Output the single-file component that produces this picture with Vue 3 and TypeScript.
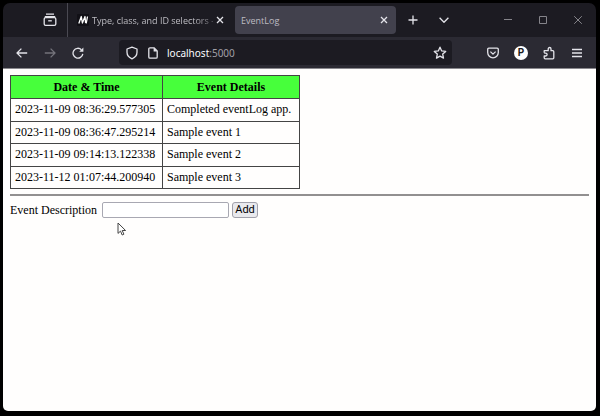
<script setup lang="ts">
import { ref } from 'vue'

interface LogEvent {
  time: string
  details: string
}

const events = ref<LogEvent[]>([
  { time: '2023-11-09 08:36:29.577305', details: 'Completed eventLog app.' },
  { time: '2023-11-09 08:36:47.295214', details: 'Sample event 1' },
  { time: '2023-11-09 09:14:13.122338', details: 'Sample event 2' },
  { time: '2023-11-12 01:07:44.200940', details: 'Sample event 3' },
])
const description = ref('')

function addEvent(): void {
  const details = description.value.trim()
  if (!details) return
  const time = new Date().toISOString().replace('T', ' ').replace('Z', '000')
  events.value.push({ time, details })
  description.value = ''
}
</script>

<template>
  <div class="window">
    <header class="tabbar">
      <button class="icon view" aria-label="Firefox View">
        <svg width="14" height="14" viewBox="0 0 14 14">
          <path d="M3 1.2h8M1.8 3.6h10.4" />
          <rect x="1.2" y="4.6" width="11.6" height="7.8" rx="1.4" />
          <path d="M5.2 7.8h3.6" />
        </svg>
      </button>
      <div class="tab">
        <svg class="favicon" width="12" height="12" viewBox="0 0 12 12">
          <rect width="12" height="12" rx="1" />
          <path d="M1.8 9.5L4.3 2.5L5.4 9L8 2.5L8.6 9M10.5 2.5L9.2 9.5" />
        </svg>
        <span class="title fade">Type, class, and ID selectors -</span>
        <button class="icon close" aria-label="Close tab">
          <svg width="8" height="8" viewBox="0 0 8 8"><path d="M1 1l6 6M7 1l-6 6" /></svg>
        </button>
      </div>
      <div class="tab active">
        <span class="title">EventLog</span>
        <button class="icon close" aria-label="Close tab">
          <svg width="8" height="8" viewBox="0 0 8 8"><path d="M1 1l6 6M7 1l-6 6" /></svg>
        </button>
      </div>
      <div class="tabtools">
        <button class="icon" aria-label="New tab">
          <svg width="10" height="10" viewBox="0 0 10 10"><path d="M5 .5v9M.5 5h9" /></svg>
        </button>
        <button class="icon" aria-label="List all tabs">
          <svg width="10" height="10" viewBox="0 0 10 10"><path d="M.6 2.8L5 7.2l4.4-4.4" /></svg>
        </button>
      </div>
      <div class="controls">
        <button class="icon" aria-label="Minimize">
          <svg width="8" height="8" viewBox="0 0 8 8"><path d="M0 3.5h8" /></svg>
        </button>
        <button class="icon" aria-label="Maximize">
          <svg width="8" height="8" viewBox="0 0 8 8"><path d="M.5.5h7v7h-7z" /></svg>
        </button>
        <button class="icon" aria-label="Close window">
          <svg width="8" height="8" viewBox="0 0 8 8"><path d="M.2.2l7.6 7.6M7.8.2L.2 7.8" /></svg>
        </button>
      </div>
    </header>

    <nav class="navbar">
      <div class="history">
        <button class="icon" aria-label="Back">
          <svg width="12" height="12" viewBox="0 0 12 12"><path d="M11.2 6H1M5.4 1.6L1 6l4.4 4.4" /></svg>
        </button>
        <button class="icon dim" aria-label="Forward">
          <svg width="12" height="12" viewBox="0 0 12 12"><path d="M.8 6H11M6.6 1.6L11 6l-4.4 4.4" /></svg>
        </button>
        <button class="icon" aria-label="Reload">
          <svg width="12" height="12" viewBox="0 0 12 12">
            <path d="M9.4 2.7A4.9 4.9 0 1 0 10.8 6.8" />
            <path class="solid" d="M11.4.6v4.2H7.2z" />
          </svg>
        </button>
      </div>
      <div class="urlbar">
        <svg width="12" height="14" viewBox="0 0 12 14">
          <path d="M6 1.2L11 3v3.2c0 3-1.8 5.2-5 6.6C2.8 11.4 1 9.2 1 6.2V3z" />
        </svg>
        <svg width="10" height="12" viewBox="0 0 10 12">
          <path d="M6 .8H2A1.2 1.2 0 0 0 .8 2v8A1.2 1.2 0 0 0 2 11.2h6A1.2 1.2 0 0 0 9.2 10V4z" />
          <path class="solid" d="M5.6.8v3.6h3.6z" />
        </svg>
        <span class="url"><b>localhost</b>:5000</span>
        <button class="icon star" aria-label="Bookmark this page">
          <svg width="14" height="14" viewBox="0 0 14 14">
            <path d="M7 1.2l1.7 3.7 4 .5-3 2.7.8 4L7 10.1l-3.5 2 .8-4-3-2.7 4-.5z" />
          </svg>
        </button>
      </div>
      <div class="extensions">
        <button class="icon" aria-label="Save to Pocket">
          <svg width="12" height="12" viewBox="0 0 12 12">
            <path d="M1.8 1.2h8.4a1.1 1.1 0 0 1 1.1 1.1v3.2a5.3 5.3 0 0 1-10.6 0V2.3a1.1 1.1 0 0 1 1.1-1.1z" />
            <path d="M3.4 4.6L6 7.1l2.6-2.5" />
          </svg>
        </button>
        <button class="icon badge" aria-label="Profile">P</button>
        <button class="icon" aria-label="Extensions">
          <svg width="12" height="14" viewBox="0 0 12 14">
            <path d="M1.2 6.8V4.7h4V2.9a1.4 1.4 0 0 1 2.8 0v1.8h1.8a1 1 0 0 1 1 1v6.1a1 1 0 0 1-1 1H2.2a1 1 0 0 1-1-1V10h1.5a1.4 1.4 0 0 0 1.4-1.4a1.4 1.4 0 0 0-1.4-1.4H1.2" />
          </svg>
        </button>
        <button class="icon" aria-label="Menu">
          <svg width="10" height="10" viewBox="0 0 10 10"><path d="M0 1.5h10M0 5h10M0 8.5h10" /></svg>
        </button>
      </div>
    </nav>

    <main class="page">
      <table>
        <thead>
          <tr><th class="when">Date &amp; Time</th><th>Event Details</th></tr>
        </thead>
        <tbody>
          <tr v-for="event in events" :key="event.time">
            <td>{{ event.time }}</td>
            <td>{{ event.details }}</td>
          </tr>
        </tbody>
      </table>
      <hr />
      <form @submit.prevent="addEvent">
        <label for="description">Event Description</label>
        <input id="description" v-model="description" type="text" />
        <button type="submit">Add</button>
      </form>
      <svg class="cursor" width="10" height="14" viewBox="0 0 10 14" aria-hidden="true">
        <path d="M1 1v10.4l2.5-2.3 1.7 3.9 1.7-.8-1.7-3.7h3.4z" />
      </svg>
    </main>
  </div>
</template>

<style>
html,
body,
#app {
  height: 100%;
}
body {
  margin: 0;
  background: #000;
}
</style>

<style scoped>
.window {
  box-sizing: border-box;
  height: 100%;
  display: flex;
  flex-direction: column;
  padding: 3px 4px 5px 3px;
  font-family: 'Open Sans', sans-serif;
  font-size: 9px;
  color: #fbfbfe;
}
svg {
  display: block;
  flex: none;
  fill: none;
  stroke: currentColor;
  stroke-width: 1.3;
  stroke-linejoin: round;
}
.solid {
  fill: currentColor;
  stroke: none;
}
.icon {
  display: flex;
  align-items: center;
  justify-content: center;
  flex: none;
  width: 28px;
  height: 28px;
  padding: 0;
  border: 0;
  background: none;
  color: #e4e4ea;
}
.tabbar {
  display: flex;
  align-items: center;
  height: 34px;
  flex: none;
  background: #1c1b22;
  border-radius: 7px 7px 0 0;
}
.view {
  box-sizing: border-box;
  width: 65px;
  height: 34px;
  padding-left: 29px;
  border-right: 1px solid #4a4952;
}
.tab {
  box-sizing: border-box;
  display: flex;
  align-items: center;
  flex: 0 1 161px;
  min-width: 0;
  height: 28px;
  margin-left: 6px;
  padding: 0 5px 0 6px;
  border-radius: 4px;
  color: #bdbcc2;
}
.tab .icon.close {
  width: 14px;
}
.tab:not(.active) {
  flex-basis: 158px;
  padding-left: 3px;
}
.tab.active {
  margin-left: 3px;
  background: #42414d;
}
.favicon {
  margin-right: 3px;
  color: #fff;
}
.favicon rect {
  fill: #111016;
  stroke: none;
}
.title {
  flex: 1;
  min-width: 0;
  white-space: nowrap;
}
.fade {
  mask-image: linear-gradient(to left, #0006, #000 20px);
}
.tabtools {
  display: flex;
  gap: 3px;
  margin-left: 3px;
}
.controls {
  display: flex;
  gap: 7px;
  margin-left: auto;
  margin-right: 4px;
}
.controls .icon {
  color: #85848a;
}
.controls svg {
  stroke-width: 1;
}
.navbar {
  box-sizing: border-box;
  display: flex;
  align-items: center;
  height: 31px;
  flex: none;
  padding: 0 5px;
  background: #2b2a33;
}
.history {
  display: flex;
}
.icon.dim {
  color: #74737b;
}
.urlbar {
  box-sizing: border-box;
  flex: 1;
  display: flex;
  align-items: center;
  gap: 10px;
  height: 25px;
  margin: 0 27px;
  padding: 0 0 0 7px;
  border-radius: 4px;
  background: #1c1b22;
  color: #e4e4ea;
}
.url {
  flex: 1;
  margin-left: -1px;
  font-family: 'Noto Sans', sans-serif;
  font-size: 10px;
  color: #a09fa6;
}
.url b {
  font-weight: 400;
  color: #fbfbfe;
}
.star {
  width: 25px;
}
.extensions {
  display: flex;
  align-items: center;
}
.icon.badge {
  width: 14px;
  height: 14px;
  margin: 0 7px;
  border-radius: 50%;
  background: #fff;
  color: #1c1b22;
  font: 700 10px Roboto, sans-serif;
}
.page {
  position: relative;
  box-sizing: border-box;
  flex: 1;
  padding: 6px 7px;
  border-top: 1px solid #8a898e;
  background: #fffefd;
  border-radius: 0 0 5px 5px;
  font: 12px 'Liberation Serif', serif;
  color: #000;
}
table {
  width: 290px;
  max-width: 100%;
  height: 114px;
  border-collapse: collapse;
}
th,
td {
  padding: 0 4px;
  border: 1px solid #444;
  text-align: left;
}
th {
  height: 22px;
  background: #47ff3b;
  text-align: center;
}
.when {
  width: 143px;
}
hr {
  margin: 5px 0 6px;
  border: 0;
  border-top: 2px solid #929090;
}
form {
  display: flex;
  align-items: center;
  gap: 3px;
}
form label {
  width: 89px;
}
form input {
  box-sizing: border-box;
  width: 127px;
  height: 16px;
  padding: 0 2px;
  border: 1px solid #a8a8b2;
  border-radius: 2px;
  background: #fff;
  font: 11px Roboto, sans-serif;
}
form button {
  box-sizing: border-box;
  width: 26px;
  height: 16px;
  padding: 0;
  border: 1px solid #a0a0aa;
  border-radius: 3px;
  background: #e9e9ed;
  color: #000;
  font: 11px/14px Roboto, sans-serif;
}
.cursor {
  position: absolute;
  left: 114px;
  top: 153px;
  fill: #fff;
  stroke: #444;
  stroke-width: 1;
}
</style>
